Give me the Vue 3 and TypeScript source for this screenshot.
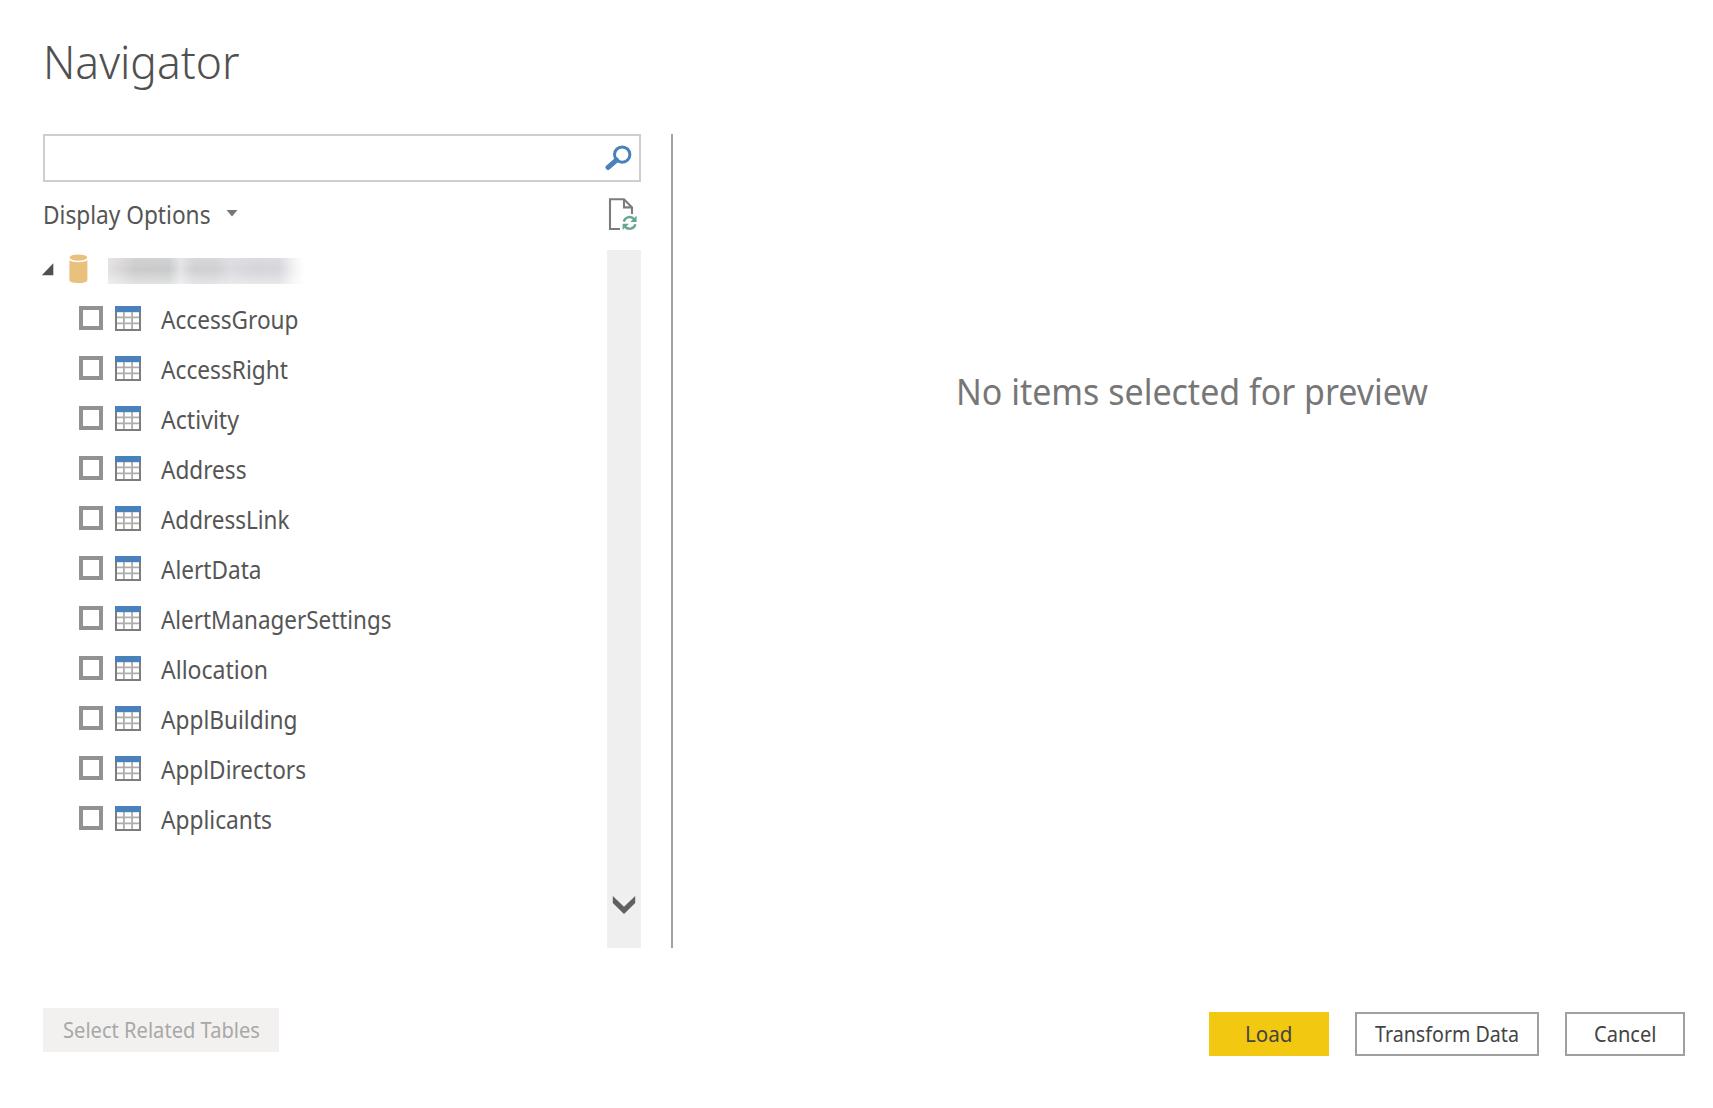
<script setup lang="ts">
import type { Directive } from 'vue'

interface TableItem {
  name: string
  width: number
}

const tables: TableItem[] = [
  { name: 'AccessGroup', width: 137.5 },
  { name: 'AccessRight', width: 127 },
  { name: 'Activity', width: 78 },
  { name: 'Address', width: 85.5 },
  { name: 'AddressLink', width: 128.5 },
  { name: 'AlertData', width: 100.5 },
  { name: 'AlertManagerSettings', width: 230.5 },
  { name: 'Allocation', width: 107 },
  { name: 'ApplBuilding', width: 136.5 },
  { name: 'ApplDirectors', width: 145 },
  { name: 'Applicants', width: 111 },
]

// Condenses a label horizontally so it occupies the given width.
const vFit: Directive<HTMLElement, number> = {
  mounted(el, binding) {
    const natural = el.getBoundingClientRect().width
    el.style.transform = `scaleX(${binding.value / natural})`
  },
}
</script>

<template>
  <div class="dialog">
    <h1 class="title"><span v-fit="196.5" class="fit">Navigator</span></h1>
    <div class="content">
      <section class="sidebar">
        <div class="search">
          <svg class="search-icon" width="28" height="28" viewBox="0 0 28 28">
            <circle cx="17.2" cy="9.6" r="7.7" fill="none" stroke="#4a80bb" stroke-width="3" />
            <path d="M11.5 15.1 3.1 22.4" stroke="#4a80bb" stroke-width="5.2" stroke-linecap="round" />
          </svg>
        </div>
        <div class="options">
          <span v-fit="167.5" class="fit options-label">Display Options</span>
          <svg class="caret" width="12" height="7" viewBox="0 0 12 7">
            <path d="M.5 0h11L6 6.5z" fill="#777" />
          </svg>
          <svg class="refresh" width="30" height="33" viewBox="0 0 30 33">
            <path d="M12 31H2V1.2h14l8 8.2V16" fill="none" stroke="#7c7c7c" stroke-width="2.1" />
            <path d="M16 1.2v8.2h8" fill="none" stroke="#7c7c7c" stroke-width="2.1" />
            <g fill="none" stroke="#62a98d" stroke-width="2.4">
              <path d="M15.8 23.6c1.4-5.2 7.5-5.8 10.5-2.4" />
              <path d="M27.4 26.2c-1.4 5.2-7.5 5.8-10.5 2.4" />
            </g>
            <path d="M28.6 17.8v6.3h-6.4zM14.6 32v-6.3H21z" fill="#62a98d" />
          </svg>
        </div>
        <div class="browser">
          <div class="tree">
            <div class="root">
              <svg class="expander" width="13" height="13" viewBox="0 0 13 13">
                <path d="M12.3.3v12H.8z" fill="#505050" />
              </svg>
              <svg class="database" width="19" height="30" viewBox="0 0 19 30">
                <path d="M.4 6.3c3 2.5 15 2.5 18 0V26c0 4.2-18 4.2-18 0z" fill="#e9c07c" />
                <ellipse cx="9.4" cy="3.6" rx="8.8" ry="3.2" fill="#e9c07c" />
              </svg>
              <div class="redacted"></div>
            </div>
            <div v-for="table in tables" :key="table.name" class="row">
              <span class="checkbox"></span>
              <svg class="table-icon" width="26" height="25" viewBox="0 0 26 25">
                <path d="M8.9 6v18M17.1 6v18M1 11.4h24M1 17.4h24" stroke="#adadad" stroke-width="1.8" />
                <path d="M1 5v18.9h24V5" fill="none" stroke="#7d7d7d" stroke-width="2" />
                <path d="M0 0h26v6.2H0z" fill="#4a80bb" />
              </svg>
              <span v-fit="table.width" class="fit row-label">{{ table.name }}</span>
            </div>
          </div>
          <div class="scrollbar">
            <svg width="24" height="19" viewBox="0 0 24 19">
              <path d="M.8 0 12 10.7 23.2 0v7L12 18 .8 7z" fill="#606060" />
            </svg>
          </div>
        </div>
      </section>
      <section class="preview"><span v-fit="472" class="fit">No items selected for preview</span></section>
    </div>
    <footer class="footer">
      <button class="button related" disabled><span v-fit="197" class="fit">Select Related Tables</span></button>
      <button class="button load"><span v-fit="47.5" class="fit">Load</span></button>
      <button class="button transform"><span v-fit="144" class="fit">Transform Data</span></button>
      <button class="button cancel"><span v-fit="62.5" class="fit">Cancel</span></button>
    </footer>
  </div>
</template>

<style>
body {
  background: #fff;
}
</style>

<style scoped>
.dialog {
  box-sizing: border-box;
  width: 1713px;
  height: 1108px;
  padding: 34px 28px 0 43px;
  overflow: hidden;
  background: #fff;
  color: #555;
  font-family: "Noto Sans", "Open Sans", sans-serif;
  font-size: 24.5px;
}
.fit {
  display: inline-block;
  flex: none;
  white-space: nowrap;
  transform-origin: left center;
}
.title {
  box-sizing: border-box;
  height: 100px;
  margin: 0;
  padding-top: 1px;
  color: #505050;
  font-size: 46.5px;
  font-weight: 300;
  line-height: 53px;
}
.content {
  display: flex;
  height: 814px;
}
.sidebar {
  box-sizing: border-box;
  width: 630px;
  padding-right: 30px;
  border-right: 2px solid #a3a3a3;
}
.search {
  display: flex;
  box-sizing: border-box;
  width: 598px;
  height: 48px;
  padding: 9px 6.5px 0 0;
  justify-content: flex-end;
  border: 2px solid #cecece;
}
.options {
  display: flex;
  width: 598px;
  height: 68px;
}
.options-label {
  margin-top: 16px;
  line-height: 34px;
}
.caret {
  margin: 28px 0 0 2px;
}
.refresh {
  margin: 15.5px 3px 0 auto;
}
.browser {
  display: flex;
  width: 598px;
  height: 698px;
}
.tree {
  width: 564px;
}
.root {
  display: flex;
  height: 43px;
}
.expander {
  margin: 13px 0 0 -2.5px;
}
.database {
  margin: 4px 0 0 15px;
}
.redacted {
  width: 196px;
  height: 26px;
  margin: 8px 0 0 20px;
  background:
    linear-gradient(180deg, rgba(255, 255, 255, 0.15), rgba(255, 255, 255, 0) 45%, rgba(255, 255, 255, 0.45)),
    linear-gradient(90deg, #e4e0e2 0, #cbcbcc 14%, #c9cacb 31%, #e2e2e5 37%, #d0d0d3 44%, #d0d0d3 54%, #dadadf 62%, #d5d5da 76%, #d6d6db 87%, #f3f3f5 95%, #fff 100%);
}
.row {
  display: flex;
  height: 50px;
  padding-left: 36px;
  align-items: center;
}
.checkbox {
  box-sizing: border-box;
  width: 24px;
  height: 24px;
  border: 4px solid #929292;
}
.table-icon {
  margin-left: 12px;
}
.row-label {
  margin: 2px 0 0 20px;
}
.scrollbar {
  display: flex;
  box-sizing: border-box;
  width: 34px;
  padding-bottom: 33px;
  align-items: flex-end;
  justify-content: center;
  background: #efefef;
}
.preview {
  padding: 232px 0 0 283px;
  color: #777;
  font-size: 35.5px;
  line-height: 50px;
}
.footer {
  display: flex;
  padding-top: 60px;
}
.button {
  display: flex;
  box-sizing: border-box;
  height: 44px;
  margin: 4px 0 0;
  padding: 0 0 3px;
  align-items: center;
  border: 2px solid #a0a0a0;
  border-radius: 0;
  background: #fff;
  color: #444;
  font-family: inherit;
  font-size: 22px;
  line-height: 30px;
}
.related {
  width: 236px;
  margin: 0 930px 0 0;
  padding-left: 18px;
  border-color: #f2f1f0;
  background: #f2f1f0;
  color: #a8a8a8;
}
.load {
  width: 120px;
  padding-left: 34px;
  border-color: #f2c811;
  background: #f2c811;
}
.transform {
  width: 184px;
  margin-left: 26px;
  padding-left: 18px;
}
.cancel {
  width: 120px;
  margin-left: 26px;
  padding-left: 27px;
}
</style>
